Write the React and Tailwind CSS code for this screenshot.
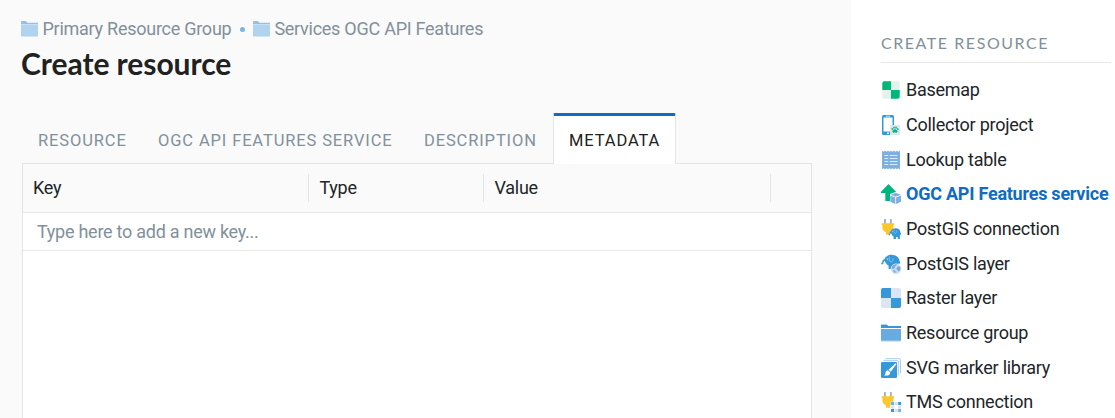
import React from "react";

const box = "block h-5 w-5 shrink-0";

function Elephant() {
  return (
    <>
      <path fill="#3498db" d="M6 2.200C7.500.9 9.800.6 12 .9c3.500.3 6 2.500 6.500 5.800l.9 2.600-.8.6-.8-1.300-.4 2.400V15h-3.300v-2.700h-2.700V15H7.600v-3.600C6.300 11 5.300 10.200 5 9 4.300 8.400 3.800 7.600 3.600 7 2.700 7.400 2.500 8.300 2.400 9.200 2.200 10.900-.1 10.800.1 8.800h1C1.100 6.800 1.900 5.500 3.500 4.900 4 3.800 4.800 2.700 6 2.200Z" />
      <path fill="none" stroke="#c5e2f7" strokeWidth=".55" d="M8.600 2.600C7.500 4.600 8.200 7.500 10.200 7.900c1.400 0 2-1.900 1.900-3.700" />
      <circle cx="6.300" cy="5.100" r=".55" fill="#fff" />
    </>
  );
}

function Plug() {
  return (
    <>
      <path fill="#a5b2bd" d="M3 0h1.900v5H3zM8.900 0h1.900v5H8.900z" />
      <path fill="#fcc62d" d="M.7 4.300h12.400v1.800h-.6v2.600c0 2.400-1.500 3.700-3.200 4.600v2.500H4.900v-2.500C3.100 12.400 1.400 11.100 1.400 8.700V6.100H.7z" />
    </>
  );
}

function Icon({ name }) {
  switch (name) {
    case "basemap":
      return (
        <svg viewBox="0 0 20 20" className={box}>
          <rect x="1.300" y="1.300" width="17.400" height="17.400" rx="2" fill="#e2f3ec" />
          <path fill="#00b67a" d="M3.300 1.300H10V10H1.300V3.300a2 2 0 0 1 2-2ZM10 10h8.700v6.700a2 2 0 0 1-2 2H10Z" />
        </svg>
      );
    case "collector":
      return (
        <svg viewBox="0 0 20 20" className={box}>
          <rect x="1" width="12" height="20" rx="1.500" fill="#3498db" />
          <path fill="#fff" d="M2.500 2.500h9v14h-9zM5 .8h4v.7H5z" />
          <circle cx="7" cy="18.200" r="1" fill="#fff" />
          <rect x="9" y="10" width="10" height="10" fill="#dce7f3" />
          <g fill="#0bb37c">
            <path d="M14 14.200c1.400 0 3 1.600 2.500 2.900-.4 1-1.500.4-2.500.4s-2.100.6-2.500-.4c-.500-1.300 1.100-2.900 2.500-2.900Z" />
            <ellipse cx="11.300" cy="14.100" rx=".8" ry="1.100" />
            <ellipse cx="13" cy="12.700" rx=".8" ry="1.100" />
            <ellipse cx="15" cy="12.700" rx=".8" ry="1.100" />
            <ellipse cx="16.800" cy="14.100" rx=".8" ry="1.100" />
          </g>
        </svg>
      );
    case "lookup":
      return (
        <svg viewBox="0 0 20 20" className={box}>
          <path fill="#7dafe0" d="M1 .7l1.500 1L4 .7l1.500 1L7 .7l1.500 1L10 .7l1.500 1L13 .7l1.500 1L16 .7l1.500 1L19 .7v18.600l-1.500-1-1.500 1-1.500-1-1.500 1-1.500-1-1.500 1-1.500-1-1.500 1-1.500-1-1.500 1-1.500-1-1.500 1z" />
          <path stroke="#dceaf8" strokeWidth="1" d="M3.500 5.500h3.700M8.800 5.500h7.700M3.500 8.500h3.700M8.800 8.500h7.700M3.500 11.500h3.700M8.800 11.500h7.700M3.500 14.500h3.700M8.800 14.500h7.700" />
        </svg>
      );
    case "ogc":
      return (
        <svg viewBox="0 0 20 20" className={box}>
          <path fill="#00b67a" d="M7.500 0L15 7.700V9h-4v8H4.300V9H0V7.700z" />
          <path fill="#fff" d="M14.500 8L21 10v11H9V10z" />
          <path fill="#7dafe0" d="M14.700 8.700l5.100 2-5.100 2.100-5.100-2.100zM9.300 11.500l5 2v6.400l-5-2.200zM15.100 13.500l4.900-2v6.200l-4.900 2.200z" />
        </svg>
      );
    case "postgis-connection":
      return (
        <svg viewBox="0 0 20 20" className={box}>
          <Plug />
          <g transform="translate(7.600 8.600) scale(.65 .76)"><Elephant /></g>
        </svg>
      );
    case "postgis-layer":
      return (
        <svg viewBox="0 0 20 20" className={box}>
          <Elephant />
          <circle cx="15" cy="15" r="5.400" fill="#fff" />
          <circle cx="15" cy="15" r="5" fill="#c2dcf3" />
          <path fill="#76a9da" d="M11 12.500c1.200-2 3.300-2.600 5-2.200l-1 1.800-1.400.2.200 1.400-1.500 1.200-1.500-.5zM16 13.500l2-1.500 1.500 1.400-.3 2.200-1.500 2-1.200-1.500-1.200-.8zM12 16l2 .4.800 1.400-1.200 1.500z" />
        </svg>
      );
    case "raster":
      return (
        <svg viewBox="0 0 20 20" className={box}>
          <rect width="20" height="20" rx="2" fill="#dbe6f2" />
          <path fill="#3498db" d="M2 0h8v10H0V2a2 2 0 0 1 2-2ZM10 10h10v8a2 2 0 0 1-2 2h-8Z" />
        </svg>
      );
    case "group":
      return (
        <svg viewBox="0 0 20 20" className={box}>
          <path fill="#3498db" d="M0 2.500Q0 1.500 1 1.500h4.500l2 1.500H20v2H0z" />
          <path fill="#a9d0f0" d="M1 1.300h4.500L6.300 2H0zM0 17.500h20v1H0z" />
          <path fill="#68abe0" d="M0 6h20v11.700H0z" />
        </svg>
      );
    case "svg":
      return (
        <svg viewBox="0 0 20 20" className={box}>
          <path fill="none" stroke="#a9cceb" strokeWidth="1" d="M2.500 2.700h13.800q1 0 1 1v13.800M4.500.7h14q1 0 1 1v13.500" />
          <rect y="4" width="16" height="16" rx="1.200" fill="#3498db" />
          <path fill="#fff" d="M14.600 5.200l.9.900-5.700 7.700-2.200-2.100zM6.900 12.300l2.300 2.200c.1 3-3.400 3.500-6.200 2.800 1.600-.6 1.300-1.300 1.500-2.700.2-1.300 1.200-2.200 2.400-2.300Z" />
        </svg>
      );
    default:
      return (
        <svg viewBox="0 0 20 20" className={box}>
          <Plug />
          <path fill="#fff" d="M9.700 9.700H20V20H9.700z" />
          <path fill="#d3e5f5" d="M13.500 10H17v3h-3.500zM10 13.500h3v3.200h-3zM13.500 17H17v3h-3.500zM17.200 13.500H20v3.200h-2.800z" />
          <path fill="#3498db" d="M17.200 10H20v3h-2.800zM10 17h3v3h-3z" />
          <path fill="#70b2e3" d="M10 10h3v3h-3zM17.200 17H20v3h-2.800z" />
        </svg>
      );
  }
}

function Crumb({ children }) {
  return (
    <a className="flex items-center gap-[4.500px]">
      <svg viewBox="0 0 17 16" className="h-4 w-[17px] shrink-0">
        <path fill="#8fc3eb" d="M0 .8Q0 0 .8 0h4l1.500 1.700H17v1.500H0z" />
        <path fill="#c7e0f4" d="M0 3h17v1.300H0z" />
        <path fill="#b0d3ef" d="M0 4h17v11.500H0z" />
      </svg>
      <span>{children}</span>
    </a>
  );
}

const resources = [
  ["basemap", "Basemap"],
  ["collector", "Collector project"],
  ["lookup", "Lookup table"],
  ["ogc", "OGC API Features service"],
  ["postgis-connection", "PostGIS connection"],
  ["postgis-layer", "PostGIS layer"],
  ["raster", "Raster layer"],
  ["group", "Resource group"],
  ["svg", "SVG marker library"],
  ["tms", "TMS connection"],
];

export default function App() {
  return (
    <div className="flex h-[418px] w-[1115px] overflow-hidden bg-[#fafafa] font-['Roboto',sans-serif] text-[18px] leading-6 tracking-[-0.26px] whitespace-nowrap text-[#212529]">
      <main className="flex w-[851px] shrink-0 flex-col pl-[22px]">
        <nav className="-ml-px mt-[17px] flex h-6 items-center text-[#82909b]">
          <Crumb>Primary Resource Group</Crumb>
          <span className="mr-[8px] ml-[8.500px] h-[5px] w-[5px] rounded-full bg-[#7fb5e0]" />
          <Crumb>Services OGC API Features</Crumb>
        </nav>
        <h1 className="-ml-px mt-[2px] mb-px h-10 font-['Lato',sans-serif] text-[30px] leading-10 font-bold tracking-[-0.050px] text-[#212121]">Create resource</h1>
        <div className="relative z-10 mt-[29px] -mb-px flex h-[51px] text-[16.5px] leading-[55px] tracking-[0.87px] text-[#82909b]">
          <span className="w-[120px] pl-4">RESOURCE</span>
          <span className="w-[266px] pl-4">OGC API FEATURES SERVICE</span>
          <span className="w-[145px] pl-4">DESCRIPTION</span>
          <span className="w-[123px] rounded-t-[2px] border-x border-t-[3px] border-x-[#e6e6e6] border-t-[#106cc0] bg-white pl-[15px] leading-[49px] text-[#212121]">METADATA</span>
        </div>
        <section className="w-[790px] flex-1 border-x border-t border-[#e4e4e4] bg-white">
          <div className="flex h-[49px] items-center border-b border-[#e8e8e8] bg-[#fafafa]">
            <div className="h-7 w-[286px] border-r border-[#e4e4e4] pl-[10px] leading-7">Key</div>
            <div className="h-7 w-[175px] border-r border-[#e4e4e4] pl-[10.500px] leading-7">Type</div>
            <div className="h-7 w-[287px] border-r border-[#e4e4e4] pl-[10.500px] leading-7">Value</div>
          </div>
          <div className="h-[38px] border-b border-[#e8e8e8] pl-[14px] leading-[37px] text-[#82909b]">Type here to add a new key...</div>
        </section>
      </main>
      <aside className="w-[264px] shrink-0 bg-white pt-[31px] pr-1 pl-[30px]">
        <h2 className="h-8 border-b border-[#e8e8e8] font-['Lato',sans-serif] text-[16px] leading-6 tracking-[1.55px] text-[#82909b]">CREATE RESOURCE</h2>
        <ul className="mt-[10px]">
          {resources.map(([icon, label]) => (
            <li key={icon} className={icon === "ogc" ? "flex h-[34.667px] items-center gap-[5px] font-bold tracking-[-0.24px] text-[#106cc0]" : "flex h-[34.667px] items-center gap-[5px]"}>
              <Icon name={icon} />
              <span>{label}</span>
            </li>
          ))}
        </ul>
      </aside>
    </div>
  );
}
